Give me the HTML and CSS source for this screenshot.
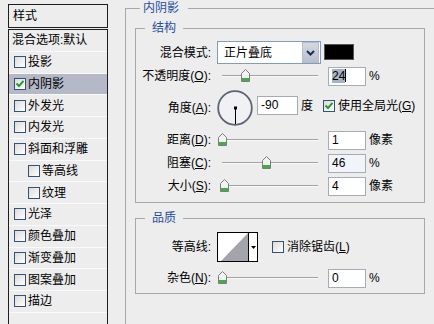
FILE: index.html
```html
<!DOCTYPE html>
<html lang="zh-CN">
<head>
    <meta charset="UTF-8">
    <meta name="viewport" content="width=device-width, initial-scale=1.0">
    <title>图层样式 - 内阴影</title>
    <link rel="stylesheet" href="styles.css">
</head>
<body>
    <div class="dialog">
        <!-- 左侧：样式列表 -->
        <div class="styles-panel">
            <div class="panel-head">样式</div>
            <ul class="style-list">
                <li class="item plain">混合选项:默认</li>
                <li class="item"><span class="check"></span>投影</li>
                <li class="item selected"><span class="check"><svg width="10" height="10" viewBox="0 0 10 10"><path d="M1.5 4.5 L4 7 L8.5 1.8" fill="none" stroke="#2a9a2a" stroke-width="2"/></svg></span>内阴影</li>
                <li class="item"><span class="check"></span>外发光</li>
                <li class="item"><span class="check"></span>内发光</li>
                <li class="item"><span class="check"></span>斜面和浮雕</li>
                <li class="item sub"><span class="check"></span>等高线</li>
                <li class="item sub"><span class="check"></span>纹理</li>
                <li class="item"><span class="check"></span>光泽</li>
                <li class="item"><span class="check"></span>颜色叠加</li>
                <li class="item"><span class="check"></span>渐变叠加</li>
                <li class="item"><span class="check"></span>图案叠加</li>
                <li class="item"><span class="check"></span>描边</li>
            </ul>
        </div>

        <!-- 右侧：内阴影设置 -->
        <fieldset class="group outer">
            <legend>内阴影</legend>

            <fieldset class="group sub-group">
                <legend>结构</legend>
                <div class="rows">
                    <div class="form-row mode-row">
                        <span class="label">混合模式:</span>
                        <div class="select">
                            <span class="select-value">正片叠底</span>
                            <span class="select-drop"><svg width="9" height="6" viewBox="0 0 9 6"><path d="M1 1 L4.5 4.5 L8 1" fill="none" stroke="#1f2d55" stroke-width="2"/></svg></span>
                        </div>
                        <span class="swatch"></span>
                    </div>

                    <div class="form-row opacity-row">
                        <span class="label">不透明度(<u>O</u>):</span>
                        <div class="slider"><div class="rail"><span class="thumb" style="left: 24%"><svg width="9" height="13" viewBox="0 0 9 13"><path d="M0.5 4.5 L4.5 0.5 L8.5 4.5 V12.5 H0.5 Z" fill="#f2f2f2" stroke="#7c7c7c"/><rect x="1" y="9" width="7" height="3" fill="#3fae4a"/></svg></span></div></div>
                        <span class="field"><span class="selected-text">24</span><span class="caret"></span></span>
                        <span class="unit">%</span>
                    </div>

                    <div class="form-row angle-row">
                        <span class="label">角度(<u>A</u>):</span>
                        <svg class="dial" width="36" height="36" viewBox="0 0 36 36">
                            <circle cx="18" cy="18" r="16.8" fill="#f1f1f3" stroke="#5d6276" stroke-width="1.8"/>
                            <line x1="18.5" y1="18" x2="18.5" y2="34" stroke="#000"/>
                            <rect x="17" y="16.5" width="3" height="3" fill="#000"/>
                        </svg>
                        <div class="angle-extra">
                            <span class="field wide">-90</span>
                            <span class="unit deg">度</span>
                            <span class="check"><svg width="10" height="10" viewBox="0 0 10 10"><path d="M1.5 4.5 L4 7 L8.5 1.8" fill="none" stroke="#2a9a2a" stroke-width="2"/></svg></span>
                            <span class="check-label">使用全局光(<u>G</u>)</span>
                        </div>
                    </div>

                    <div class="form-row gap4">
                        <span class="label">距离(<u>D</u>):</span>
                        <div class="slider"><div class="rail"><span class="thumb" style="left: 0.5%"><svg width="9" height="13" viewBox="0 0 9 13"><path d="M0.5 4.5 L4.5 0.5 L8.5 4.5 V12.5 H0.5 Z" fill="#f2f2f2" stroke="#7c7c7c"/><rect x="1" y="9" width="7" height="3" fill="#3fae4a"/></svg></span></div></div>
                        <span class="field">1</span>
                        <span class="unit">像素</span>
                    </div>

                    <div class="form-row">
                        <span class="label">阻塞(<u>C</u>):</span>
                        <div class="slider"><div class="rail"><span class="thumb" style="left: 46%"><svg width="9" height="13" viewBox="0 0 9 13"><path d="M0.5 4.5 L4.5 0.5 L8.5 4.5 V12.5 H0.5 Z" fill="#f2f2f2" stroke="#7c7c7c"/><rect x="1" y="9" width="7" height="3" fill="#3fae4a"/></svg></span></div></div>
                        <span class="field tinted">46</span>
                        <span class="unit">%</span>
                    </div>

                    <div class="form-row">
                        <span class="label">大小(<u>S</u>):</span>
                        <div class="slider"><div class="rail"><span class="thumb" style="left: 3%"><svg width="9" height="13" viewBox="0 0 9 13"><path d="M0.5 4.5 L4.5 0.5 L8.5 4.5 V12.5 H0.5 Z" fill="#f2f2f2" stroke="#7c7c7c"/><rect x="1" y="9" width="7" height="3" fill="#3fae4a"/></svg></span></div></div>
                        <span class="field">4</span>
                        <span class="unit">像素</span>
                    </div>
                </div>
            </fieldset>

            <fieldset class="group sub-group quality">
                <legend>品质</legend>
                <div class="rows">
                    <div class="form-row contour-row">
                        <span class="label">等高线:</span>
                        <div class="contour">
                            <span class="curve"><svg width="30" height="28" viewBox="0 0 30 28"><polygon points="3,28 30,0 30,28" fill="#a4a4ac"/></svg></span>
                            <span class="contour-drop"><svg width="5" height="3" viewBox="0 0 5 3"><polygon points="0,0 5,0 2.5,3" fill="#000"/></svg></span>
                        </div>
                        <span class="check"></span>
                        <span class="check-label">消除锯齿(<u>L</u>)</span>
                    </div>

                    <div class="form-row noise-row">
                        <span class="label">杂色(<u>N</u>):</span>
                        <div class="slider"><div class="rail"><span class="thumb" style="left: 0%"><svg width="9" height="13" viewBox="0 0 9 13"><path d="M0.5 4.5 L4.5 0.5 L8.5 4.5 V12.5 H0.5 Z" fill="#f2f2f2" stroke="#7c7c7c"/><rect x="1" y="9" width="7" height="3" fill="#3fae4a"/></svg></span></div></div>
                        <span class="field">0</span>
                        <span class="unit">%</span>
                    </div>
                </div>
            </fieldset>
        </fieldset>
    </div>
</body>
</html>
```

FILE: styles.css
```css
html, body {
    margin: 0;
    overflow: hidden;
}

body {
    font-family: "Liberation Sans", "Noto Sans CJK SC", sans-serif;
    font-size: 12px;
    line-height: 16px;
    color: #000;
    background-color: #ededed;
}

.dialog {
    display: flex;
    align-items: flex-start;
    padding-left: 8px;
    height: 324px;
}

/* 左侧样式列表 */
.styles-panel {
    width: 100px;
    flex: none;
    margin-top: 4px;
}

.panel-head {
    height: 24px;
    box-sizing: border-box;
    border: 1px solid #1e1e1e;
    line-height: 22px;
    padding-left: 4px;
}

.style-list {
    list-style: none;
    margin: 1px 0 0;
    padding: 0;
    height: 320px;
    border: 1px solid #1e1e1e;
    border-bottom: none;
}

.item {
    display: flex;
    align-items: center;
    height: 20.75px;
    border-bottom: 1px solid #fafafa;
    padding-left: 5px;
    white-space: nowrap;
}

.item.plain {
    padding-left: 3px;
}

.item.sub {
    padding-left: 19px;
}

.item.selected {
    background-color: #b4b8c7;
}

.check {
    display: inline-flex;
    align-items: center;
    justify-content: center;
    width: 12px;
    height: 12px;
    box-sizing: border-box;
    flex: none;
    border: 1px solid #34517a;
    background: linear-gradient(135deg, #dcdbd5, #ffffff);
    margin-right: 2px;
}

.check svg {
    display: block;
}

/* 分组框 */
.group {
    margin: 0;
    border: 1px solid #a8a8a8;
    box-sizing: border-box;
    min-width: 0;
}

.group legend {
    color: #1f4fa3;
    line-height: 16px;
    font-size: 12px;
}

.outer {
    margin-left: 17px;
    width: 340px;
    height: 340px;
    padding: 4px 0 0 9px;
    flex: none;
}

.outer > legend {
    margin-left: 5px;
    padding: 0 9px 0 3px;
}

.sub-group {
    width: 290px;
    padding: 0 0 6px;
}

.sub-group > legend {
    margin-left: 9px;
    padding: 0 7px;
}

.quality {
    margin-top: 7px;
    padding-bottom: 5px;
}

.rows {
    display: flex;
    flex-direction: column;
}

.form-row {
    display: flex;
    align-items: center;
    height: 20px;
    margin-top: 3px;
    white-space: nowrap;
}

.form-row .label {
    width: 75px;
    flex: none;
    text-align: right;
    margin-right: 6px;
}

.mode-row {
    height: 23px;
    margin-top: 5px;
}

.opacity-row {
    margin-top: 2px;
}

.angle-row {
    height: 36px;
    margin-top: 4px;
}

.gap4 {
    margin-top: 4px;
}

.contour-row {
    height: 30px;
    margin-top: 6px;
}

.noise-row {
    margin-top: 6px;
}

/* 下拉框 */
.select {
    display: flex;
    align-items: center;
    width: 104px;
    height: 23px;
    box-sizing: border-box;
    border: 1px solid #7f9db9;
    background-color: #fff;
}

.select-value {
    flex: 1;
    padding-left: 6px;
}

.select-drop {
    display: flex;
    align-items: center;
    justify-content: center;
    width: 15px;
    height: 19px;
    margin-right: 1px;
    border: 1px solid #b4bccd;
    background: linear-gradient(#d4d8e2, #b9bfcf);
}

.swatch {
    width: 30px;
    height: 16px;
    box-sizing: border-box;
    margin-left: 3px;
    margin-top: -2px;
    border: 1px solid #555;
    background-color: #000;
}

/* 滑块 */
.slider {
    width: 104px;
    height: 20px;
    flex: none;
    margin-right: 7px;
    display: flex;
    align-items: center;
}

.rail {
    position: relative;
    margin-left: 5px;
    width: 96px;
    height: 1px;
    background-color: #a2a2a2;
    border-bottom: 1px solid #fafafa;
}

.thumb {
    position: absolute;
    top: -6px;
    margin-left: -4.5px;
}

.thumb svg {
    display: block;
}

/* 数值输入框 */
.field {
    display: inline-block;
    width: 38px;
    height: 19px;
    box-sizing: border-box;
    flex: none;
    border: 1px solid #a5acb5;
    background-color: #fff;
    padding-left: 3px;
    line-height: 17px;
}

.field.wide {
    width: 41px;
}

.field.tinted {
    background-color: #f1f5fb;
}

.selected-text {
    background-color: #a9b1c4;
}

.caret {
    display: inline-block;
    width: 1px;
    height: 13px;
    vertical-align: -2px;
    background-color: #000;
}

.unit {
    margin-left: 3px;
}

/* 角度 */
.dial {
    display: block;
    flex: none;
}

.angle-extra {
    display: flex;
    align-items: center;
    align-self: flex-start;
    margin-top: 6px;
    margin-left: 4px;
}

.unit.deg {
    margin-right: 10px;
}

.check-label {
    margin-left: 1px;
}

/* 等高线 */
.contour {
    display: flex;
    width: 41px;
    height: 30px;
    box-sizing: border-box;
    border: 1px solid #000;
    background-color: #fff;
    margin-right: 14px;
}

.curve {
    width: 30px;
    height: 28px;
    border-right: 1px solid #000;
}

.curve svg {
    display: block;
}

.contour-drop {
    flex: 1;
    display: flex;
    align-items: center;
    justify-content: center;
}
```
